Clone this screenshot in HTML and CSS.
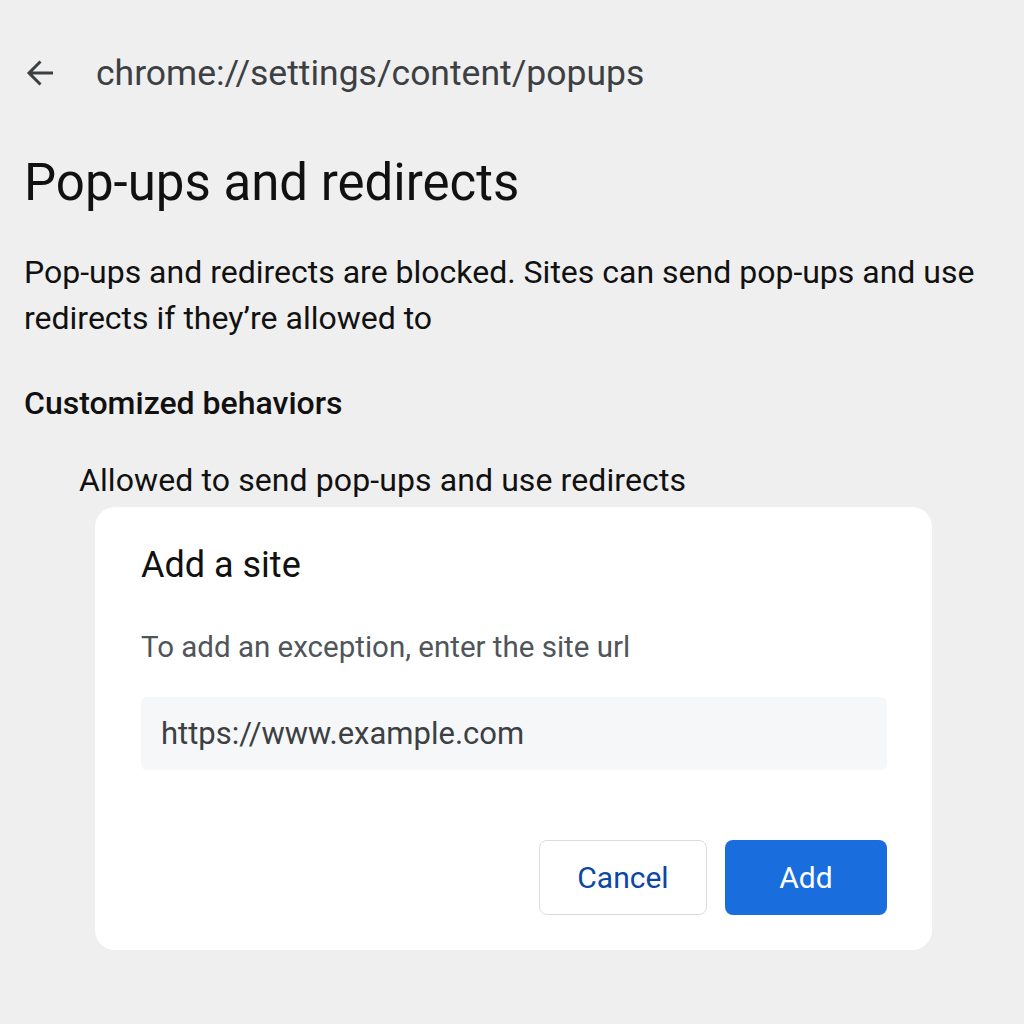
FILE: index.html
```html
<!DOCTYPE html>
<html lang="en">
<head>
    <meta charset="UTF-8">
    <title>Pop-ups and redirects</title>
    <link rel="stylesheet" href="styles.css">
</head>
<body>
    <div class="topbar">
        <svg class="back" width="28" height="28" viewBox="0 0 28 28">
            <path d="M27 14H3M14.5 2.5L3 14l11.5 11.5" fill="none" stroke="#3c4043" stroke-width="3"/>
        </svg>
        <span class="url">chrome://settings/content/popups</span>
    </div>

    <h1>Pop-ups and redirects</h1>
    <p class="desc">Pop-ups and redirects are blocked. Sites can send pop-ups and use redirects if they’re allowed to</p>

    <h2>Customized behaviors</h2>
    <div class="sub">Allowed to send pop-ups and use redirects</div>

    <div class="dialog">
        <div class="dialog-title">Add a site</div>
        <div class="dialog-text">To add an exception, enter the site url</div>
        <div class="field">https://www.example.com</div>
        <div class="actions">
            <button class="btn cancel">Cancel</button>
            <button class="btn add">Add</button>
        </div>
    </div>
</body>
</html>
```

FILE: styles.css
```css
body {
    margin: 0;
    padding: 0 24px;
    background-color: #efefef;
    font-family: Roboto, "Noto Sans", sans-serif;
    color: #111;
}
.topbar {
    display: flex;
    align-items: center;
    height: 60px;
    margin-top: 43px;
}
.back {
    margin-left: 2px;
    margin-right: 42px;
}
.url {
    font-size: 35.5px;
    color: #3c4043;
}
h1 {
    font-size: 51px;
    font-weight: 400;
    margin: 50px 0 0;
    line-height: 60px;
}
.desc {
    font-size: 32px;
    line-height: 46px;
    margin: 36px 0 0;
    max-width: 970px;
}
h2 {
    font-size: 32px;
    font-weight: 500;
    margin: 39px 0 0;
    line-height: 46px;
}
.sub {
    font-size: 32px;
    letter-spacing: 0.1px;
    line-height: 46px;
    margin: 31px 0 0 55px;
}
.dialog {
    background-color: #fff;
    border-radius: 20px;
    margin: 4px 0 0 71px;
    width: 837px;
    height: 443px;
    box-sizing: border-box;
    padding: 0 45px 0 46px;
}
.dialog-title {
    font-size: 36px;
    padding-top: 38px;
    line-height: 40px;
}
.dialog-text {
    font-size: 29.5px;
    color: #50555a;
    margin-top: 42px;
    line-height: 40px;
}
.field {
    background-color: #f5f7f9;
    border-radius: 6px;
    height: 73px;
    line-height: 73px;
    margin-top: 30px;
    padding-left: 20px;
    font-size: 31px;
    color: #3c4043;
}
.actions {
    display: flex;
    justify-content: flex-end;
    gap: 18px;
    margin-top: 70px;
}
.btn {
    height: 75px;
    border-radius: 8px;
    font-family: Roboto, sans-serif;
    font-size: 30px;
    cursor: pointer;
}
.cancel {
    width: 168px;
    background-color: #fff;
    border: 1px solid #dadce0;
    color: #0b48a3;
}
.add {
    width: 162px;
    background-color: #1a6ddd;
    border: none;
    color: #fff;
}
```
